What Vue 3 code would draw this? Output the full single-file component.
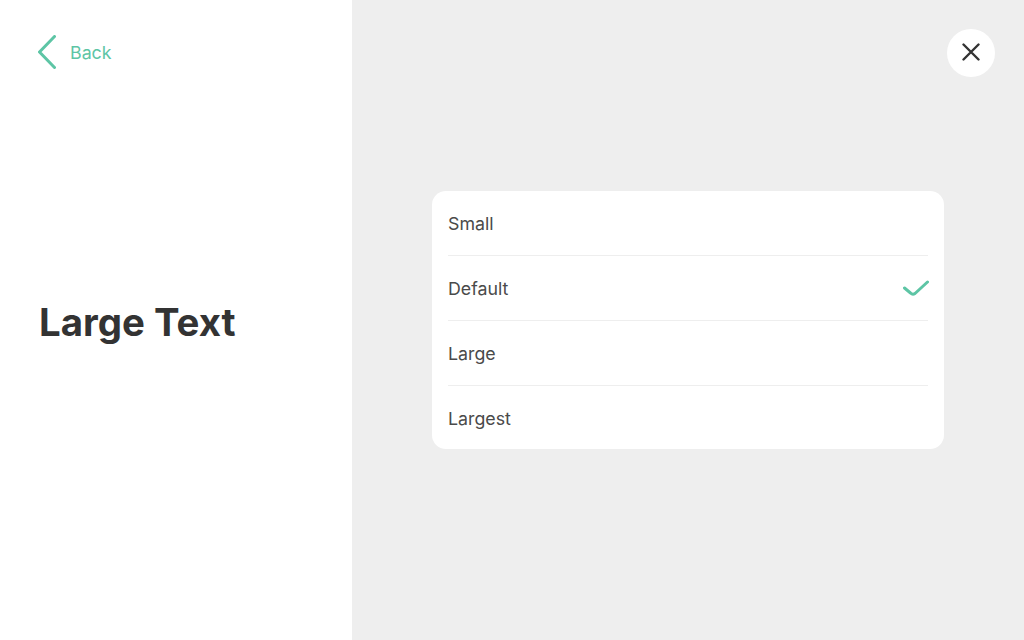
<template>
  <div class="page">
    <aside class="side">
      <button type="button" class="back">
        <svg class="back-icon" width="18" height="34" viewBox="0 0 18 34">
          <path d="M16.5 1.5 L1.5 17 L16.5 32.5" />
        </svg>
        <span>Back</span>
      </button>
      <h1 class="title">Large Text</h1>
    </aside>

    <main class="main">
      <button type="button" class="close">
        <svg width="18" height="18" viewBox="0 0 18 18">
          <path d="M1.5 1.5 L16.5 16.5 M16.5 1.5 L1.5 16.500" />
        </svg>
      </button>

      <ul class="card">
        <li v-for="opt in options" :key="opt" class="row">
          <span class="label">{{ opt }}</span>
          <svg v-if="opt === selected" class="check" width="26" height="16" viewBox="0 0 26 16">
            <path d="M1.500 8 L7.500 13 C9 14.500 10.500 14.500 12 13.500 L24.500 2" />
          </svg>
        </li>
      </ul>
    </main>
  </div>
</template>

<script setup>
import { ref } from 'vue'

const options = ['Small', 'Default', 'Large', 'Largest']
const selected = ref('Default')
</script>

<style>
html,
body {
  margin: 0;
  padding: 0;
}
</style>

<style scoped>
.page {
  display: flex;
  width: 1024px;
  height: 640px;
  overflow: hidden;
  font-family: Inter, "Liberation Sans", sans-serif;
  color: #333;
}

.side {
  position: relative;
  display: flex;
  align-items: center;
  width: 352px;
  flex: none;
  box-sizing: border-box;
  padding-left: 39px;
  background: #fff;
}

.back {
  position: absolute;
  top: 35px;
  left: 38px;
  display: flex;
  align-items: center;
  gap: 14px;
  padding: 0;
  border: none;
  background: none;
  font: inherit;
  font-size: 17.8px;
  color: #5dc5a5;
  cursor: pointer;
}

.back-icon path {
  fill: none;
  stroke: #5dc5a5;
  stroke-width: 3;
  stroke-linecap: round;
  stroke-linejoin: round;
}

.title {
  margin: 0;
  padding-top: 4px;
  font-size: 38.4px;
  font-weight: 700;
  color: #333;
}

.main {
  position: relative;
  flex: 1;
  display: flex;
  justify-content: center;
  align-items: center;
  background: #eee;
}

.close {
  position: absolute;
  top: 29px;
  right: 29px;
  display: flex;
  align-items: center;
  justify-content: center;
  width: 48px;
  height: 48px;
  padding: 0;
  border: none;
  border-radius: 50%;
  background: #fff;
  cursor: pointer;
}

.close svg {
  margin-bottom: 2px;
}

.close path {
  fill: none;
  stroke: #333;
  stroke-width: 2.4;
  stroke-linecap: round;
}

.card {
  width: 512px;
  margin: 0;
  padding: 0 16px;
  box-sizing: border-box;
  list-style: none;
  background: #fff;
  border-radius: 14px;
}

.row {
  display: flex;
  align-items: center;
  justify-content: space-between;
  height: 64px;
  border-bottom: 1px solid #eee;
  font-size: 17.8px;
  color: #4a4a4a;
}

.row:last-child {
  height: 63px;
  border-bottom: none;
}

.row:last-child .label {
  padding-top: 2px;
}

.check {
  margin-right: -1px;
}

.check path {
  fill: none;
  stroke: #5dc5a5;
  stroke-width: 3;
  stroke-linecap: round;
  stroke-linejoin: round;
}
</style>
